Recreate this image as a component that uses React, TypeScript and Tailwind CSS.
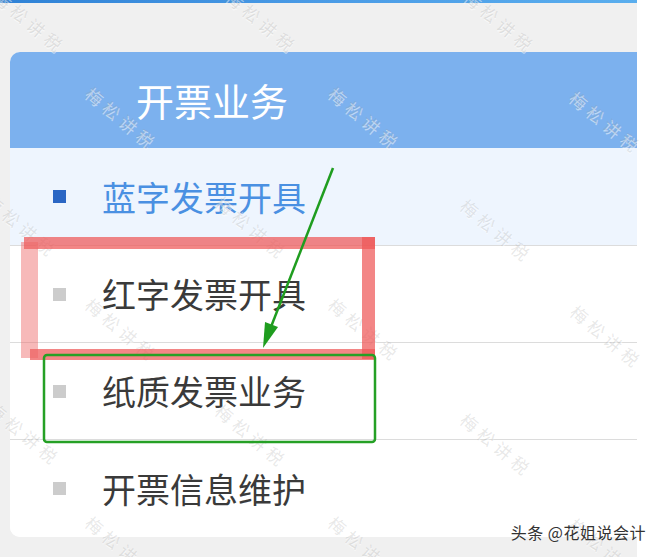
import React from "react";

const items = [
  { label: "蓝字发票开具", active: true },
  { label: "红字发票开具", active: false },
  { label: "纸质发票业务", active: false },
  { label: "开票信息维护", active: false },
];

// faint diagonal watermark centers
const marks = [
  [30, 22], [262, 22], [500, 22],
  [122, 118], [365, 118], [606, 122],
  [22, 226], [252, 228], [497, 231],
  [122, 330], [365, 330], [607, 337],
  [25, 434], [252, 436], [497, 445],
  [122, 548], [365, 548], [606, 550],
];

function Watermark({ x, y }: { x: number; y: number }) {
  return (
    <span
      className="absolute whitespace-nowrap text-[17px] tracking-[5px] text-[rgba(150,150,150,0.22)] [text-shadow:1px_1px_0_rgba(255,255,255,0.5)]"
      style={{ left: x, top: y, transform: "translate(-50%, -50%) rotate(40deg)" }}
    >
      梅松讲税
    </span>
  );
}

export default function App() {
  return (
    <div className="relative w-[660px] h-[557px] overflow-hidden bg-white font-['Noto_Sans_CJK_SC','Noto_Sans',sans-serif]">
      <div className="flex h-full">
        <div className="w-[637px] h-full bg-[#f0f0f0] flex flex-col">
          <div className="h-[3px] bg-gradient-to-r from-[#2f82d6] via-[#4a9be6] to-[#5aaeee]" />
          <div className="mt-[49px] ml-[10px] bg-white rounded-l-[10px] overflow-hidden">
            <div className="h-[96px] bg-[#7cb1ee] flex items-center pl-[126px] text-white text-[38px] leading-none">
              开票业务
            </div>
            {items.map((it, i) => (
              <div
                key={it.label}
                className={
                  "flex items-center pl-[43px] " +
                  (i === 0 ? "h-[98px] bg-[#eef5fe] " : "h-[97px] bg-white ") +
                  (i < items.length - 1 ? "border-b border-[#dcdcdc]" : "")
                }
              >
                <span
                  className={
                    "w-[13px] h-[13px] " + (it.active ? "bg-[#2a66c4]" : "bg-[#cccccc]")
                  }
                />
                <span
                  className={
                    "ml-[36px] text-[34px] leading-none " +
                    (it.active ? "text-[#4a90e2]" : "text-[#3a3a3a]")
                  }
                >
                  {it.label}
                </span>
              </div>
            ))}
          </div>
        </div>
        <div className="flex-1 bg-white" />
      </div>

      {/* annotations */}
      <div className="absolute inset-0 pointer-events-none">
        {marks.map(([x, y], i) => (
          <Watermark key={i} x={x} y={y} />
        ))}
        <svg width="660" height="557" className="absolute left-0 top-0">
          <g fill="rgba(238,88,88,0.72)">
            <rect x="24" y="237" width="351" height="12" />
            <rect x="362" y="237" width="13" height="122" />
            <rect x="30" y="349" width="345" height="11" />
          </g>
          <rect x="21" y="242" width="17" height="116" fill="rgba(238,100,100,0.45)" />
          <rect
            x="44"
            y="355"
            width="331"
            height="87"
            rx="3"
            fill="none"
            stroke="#25a025"
            strokeWidth="2.5"
          />
          <line x1="333" y1="168" x2="269" y2="332" stroke="#1f9d1f" strokeWidth="2.5" />
          <polygon points="263,348 278,327 265,322" fill="#1f9d1f" />
        </svg>
        <span className="absolute right-[14px] top-[520px] text-[16px] tracking-[0.5px] text-[#333] [text-shadow:0_0_2px_#fff]">
          头条 @花姐说会计
        </span>
      </div>
    </div>
  );
}
